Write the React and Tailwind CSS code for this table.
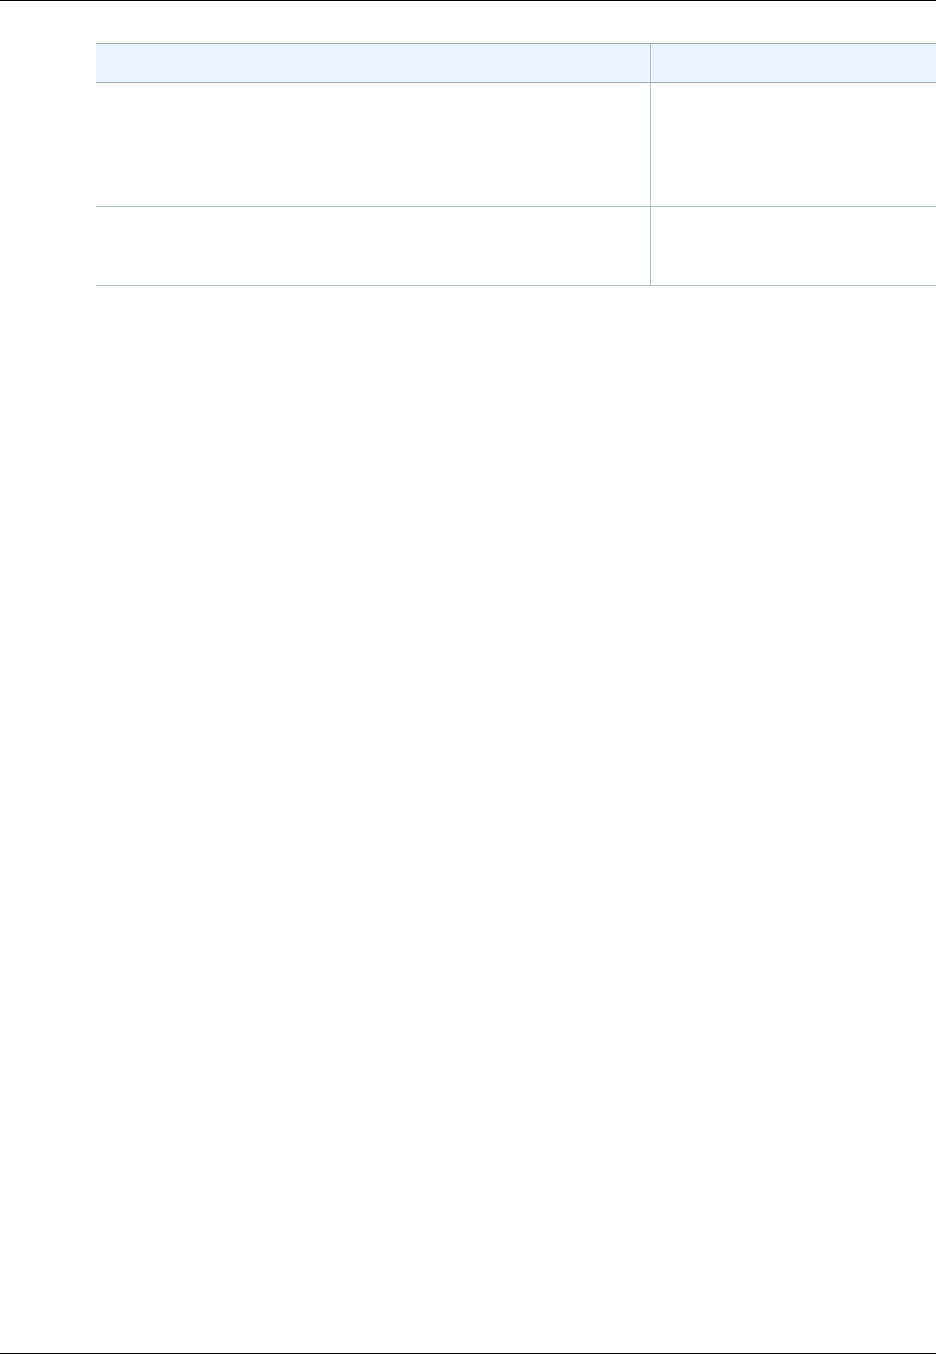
export default function App() {
  return (
    <div className="w-[936px] h-[1354px] bg-white overflow-hidden flex flex-col relative" style={{ fontFamily: '"Liberation Sans", Arial, sans-serif' }}>
      <div className="h-px bg-black w-full shrink-0" />
      <div className="pt-[42px] pl-[96px] flex-1">
        <div className="w-[860px]">
          <div className="flex h-[40px] bg-[#eaf3fe] border-t border-b border-[#9ea9a7]">
            <div className="w-[555px] border-r border-[#b3bebc]" />
            <div className="flex-1" />
          </div>
          <div className="flex h-[124px] border-b border-[#b6c1be]">
            <div className="w-[555px] border-r border-[#b6c1be]" />
            <div className="flex-1" />
          </div>
          <div className="flex h-[79px] border-b border-[#b6c1be]">
            <div className="w-[555px] border-r border-[#b6c1be]" />
            <div className="flex-1" />
          </div>
        </div>
      </div>
      <div className="h-px bg-black w-full shrink-0" />
    </div>
  );
}
